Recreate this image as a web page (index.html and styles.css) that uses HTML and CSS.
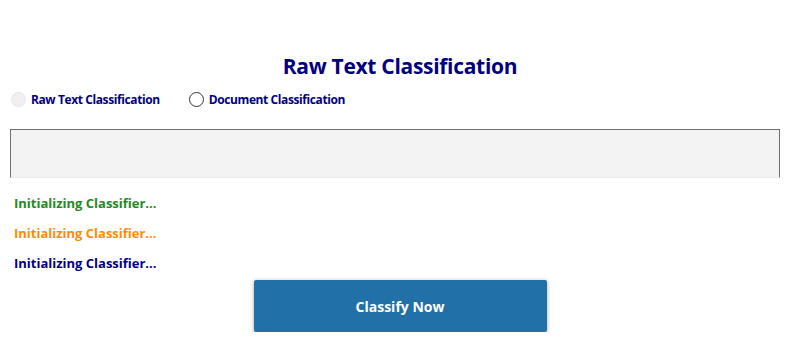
FILE: index.html
```html
<!DOCTYPE html>
<html lang="en">
<head>
    <meta charset="UTF-8">
    <title>Text Classifier</title>
    <link rel="stylesheet" href="styles.css">
</head>
<body>
    <div class="app">
        <h1 class="title">Raw Text Classification</h1>

        <div class="modes">
            <label class="mode">
                <input type="radio" name="mode" checked disabled>
                <span>Raw Text Classification</span>
            </label>
            <label class="mode">
                <input type="radio" name="mode">
                <span>Document Classification</span>
            </label>
        </div>

        <textarea class="input-box"></textarea>

        <div class="status">
            <div class="status-line green">Initializing Classifier...</div>
            <div class="status-line orange">Initializing Classifier...</div>
            <div class="status-line navy">Initializing Classifier...</div>
        </div>

        <div class="actions">
            <button class="classify-btn">Classify Now</button>
        </div>
    </div>
</body>
</html>
```

FILE: styles.css
```css
body {
    margin: 0;
    background: #ffffff;
    font-family: 'Open Sans', 'Noto Sans', sans-serif;
}

.app {
    padding: 52px 20px 0 10px;
}

.title {
    margin: 0;
    text-align: center;
    font-size: 21px;
    font-weight: 700;
    color: #000080;
    letter-spacing: -0.3px;
    padding-left: 10px;
}

.modes {
    display: flex;
    gap: 28px;
    margin-top: 11px;
    align-items: center;
}

.mode {
    display: flex;
    align-items: center;
    gap: 5px;
    font-size: 12px;
    font-weight: 700;
    color: #000080;
    letter-spacing: -0.4px;
}

.mode input {
    appearance: none;
    width: 15px;
    height: 15px;
    margin: 0 0 0 1px;
    border: 1.5px solid #333333;
    border-radius: 50%;
    background: #ffffff;
}

.mode input:disabled {
    border-color: #e6e6e6;
    background: #f0f0f0;
}

.input-box {
    display: block;
    box-sizing: border-box;
    width: 770px;
    height: 49px;
    margin-top: 21px;
    resize: none;
    border: 1px solid #6e6e6e;
    border-bottom: 1px solid #ececec;
    background: #f3f3f3;
    outline: none;
}

.status {
    padding-left: 4px;
    margin-top: 16px;
}

.status-line {
    font-size: 13px;
    font-weight: 700;
    height: 30px;
    letter-spacing: 0;
}

.green { color: #228b22; }
.orange { color: #ff8c00; }
.navy { color: #000080; }

.actions {
    display: flex;
    justify-content: center;
    padding-left: 10px;
    margin-top: -4px;
}

.classify-btn {
    width: 293px;
    height: 52px;
    border: none;
    border-radius: 2px;
    background: #2171a8;
    color: #ffffff;
    font-family: inherit;
    font-size: 14px;
    font-weight: 700;
    box-shadow: 0 1px 4px rgba(0, 0, 0, 0.35);
}
```
